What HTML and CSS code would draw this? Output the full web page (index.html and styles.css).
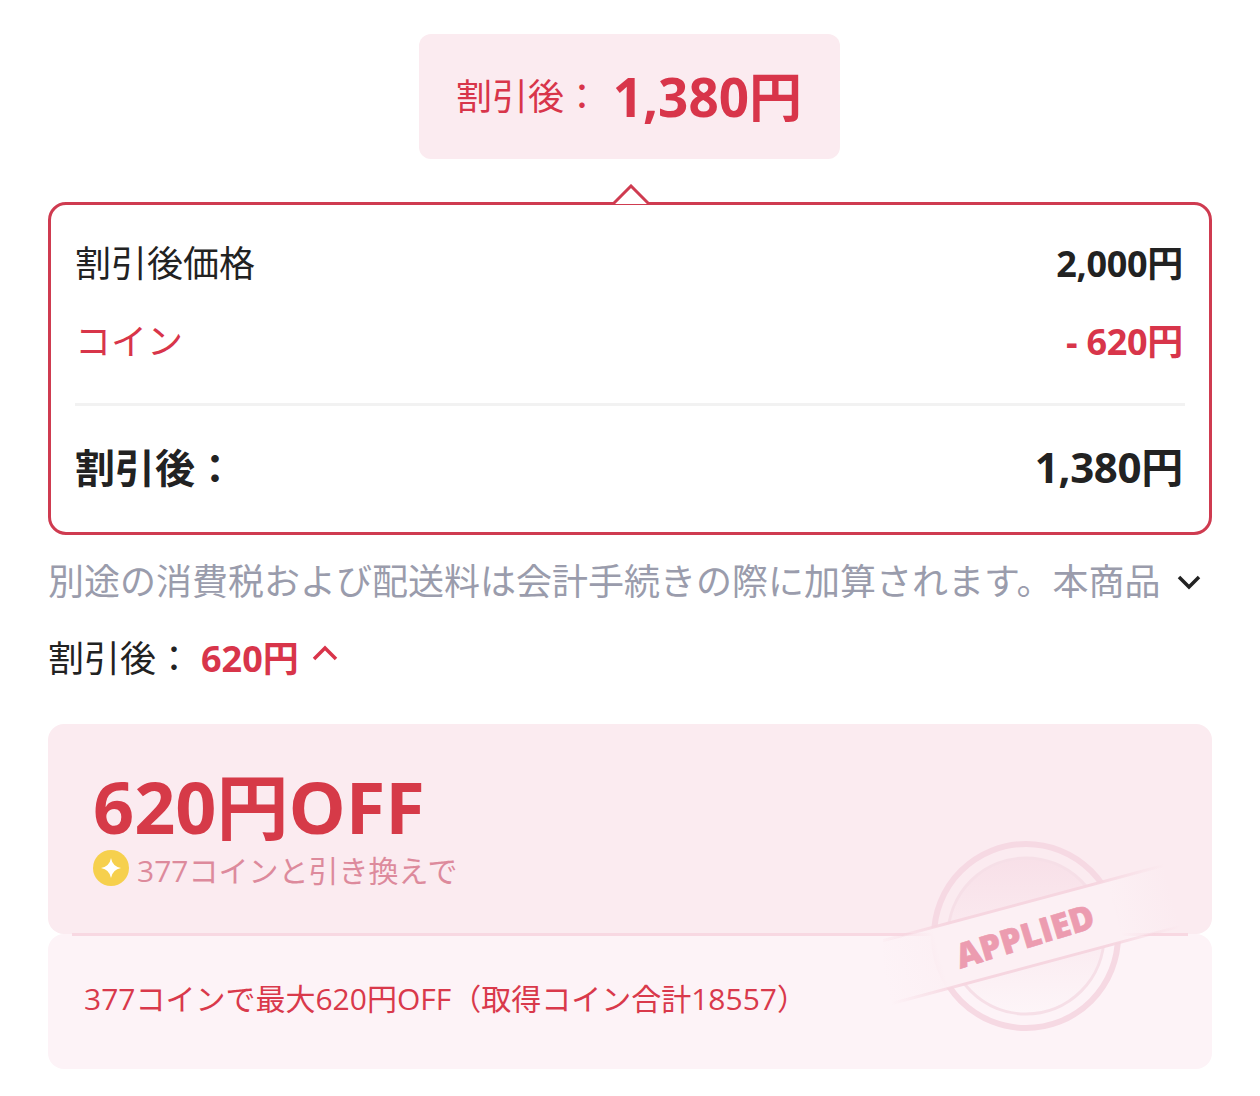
FILE: index.html
```html
<!DOCTYPE html>
<html lang="ja">
<head>
  <meta charset="UTF-8" />
  <title>割引後</title>
  <link rel="stylesheet" href="styles.css">
</head>
<body>
  <div class="badge-row">
    <div class="badge">
      <span class="badge-label">割引後：</span>
      <span class="badge-price">1,380円</span>
    </div>
  </div>

  <section class="detail">
    <svg class="detail-arrow" width="38" height="21" viewBox="0 0 38 21">
      <path d="M0 20 L1 20 L19 2 L37 20 L38 20" fill="#fff" stroke="#cf3b50" stroke-width="3" />
    </svg>
    <div class="detail-row">
      <span>割引後価格</span>
      <span class="amount">2,000円</span>
    </div>
    <div class="detail-row red">
      <span>コイン</span>
      <span class="amount">- 620円</span>
    </div>
    <div class="detail-row total">
      <span>割引後：</span>
      <span class="amount">1,380円</span>
    </div>
  </section>

  <div class="note-row">
    <p class="note">別途の消費税および配送料は会計手続きの際に加算されます。本商品</p>
    <svg class="chev" width="24" height="16" viewBox="0 0 24 16">
      <path d="M2 3 L12 13 L22 3" fill="none" stroke="#222" stroke-width="3.5" />
    </svg>
  </div>

  <div class="discount-row">
    <span>割引後：</span>
    <span class="discount-price">620円</span>
    <svg class="chev-up" width="26" height="16" viewBox="0 0 26 16">
      <path d="M2 14 L13 3 L24 14" fill="none" stroke="#d9344a" stroke-width="3.5" />
    </svg>
  </div>

  <section class="coupon">
    <div class="coupon-top">
      <div class="coupon-title">620円OFF</div>
      <div class="coupon-coin">
        <svg class="coin" width="36" height="36" viewBox="0 0 36 36">
          <circle cx="18" cy="18" r="18" fill="#f6d04d" />
          <path d="M18 8 Q19.5 16.5 28 18 Q19.5 19.5 18 28 Q16.5 19.5 8 18 Q16.5 16.5 18 8 Z" fill="#fff" />
        </svg>
        <span class="coin-text">377コインと引き換えで</span>
      </div>
    </div>
    <div class="coupon-line"></div>
    <div class="coupon-bottom">377コインで最大620円OFF（取得コイン合計18557）</div>

    <svg class="stamp" width="300" height="200" viewBox="0 0 300 200">
      <defs>
        <linearGradient id="band" x1="0" x2="1" y1="0" y2="0">
          <stop offset="0" stop-color="#fcf0f4" stop-opacity="0" />
          <stop offset="0.2" stop-color="#fcf0f4" />
          <stop offset="0.8" stop-color="#fcf0f4" />
          <stop offset="1" stop-color="#fcf0f4" stop-opacity="0" />
        </linearGradient>
        <linearGradient id="edge" x1="0" x2="1" y1="0" y2="0">
          <stop offset="0" stop-color="#f6d6e0" stop-opacity="0" />
          <stop offset="0.25" stop-color="#f6d6e0" />
          <stop offset="0.75" stop-color="#f6d6e0" />
          <stop offset="1" stop-color="#f6d6e0" stop-opacity="0" />
        </linearGradient>
        <linearGradient id="disc" x1="0" x2="0" y1="0" y2="1">
          <stop offset="0" stop-color="#f8e0e8" />
          <stop offset="1" stop-color="#fdf5f8" />
        </linearGradient>
      </defs>
      <circle cx="143" cy="100" r="92" fill="none" stroke="#f6d9e3" stroke-width="6" />
      <circle cx="143" cy="100" r="78" fill="url(#disc)" stroke="#f6dfe7" stroke-width="3" />
      <g transform="rotate(-15 143 100)">
        <rect x="-5" y="68" width="300" height="62" fill="url(#band)" />
        <rect x="-5" y="66" width="300" height="3" fill="url(#edge)" />
        <rect x="-5" y="129" width="300" height="3" fill="url(#edge)" />
      </g>
      <text class="stamp-text" x="142" y="112" text-anchor="middle" transform="rotate(-17 143 100)">APPLIED</text>
    </svg>
  </section>
</body>
</html>
```

FILE: styles.css
```css
body {
  margin: 0;
  padding: 34px 48px 0;
  font-family: "Open Sans", "Noto Sans CJK JP", sans-serif;
  background-color: #fff;
  color: #222;
  overflow: hidden;
}

.badge-row { display: flex; justify-content: center; }
.badge { width: 421px; height: 125px; margin-right: 1px; box-sizing: border-box; padding: 0 38px 5px 37px; background: #fbebf0; border-radius: 12px; display: flex; align-items: center; justify-content: space-between; color: #d8354a; }
.badge-label { font-size: 36px; white-space: nowrap; }
.badge-price { font-size: 53px; font-weight: 700; }

.detail { position: relative; margin-top: 43px; height: 333px; box-sizing: border-box; border: 3px solid #cf3b50; border-radius: 18px; padding: 17px 24px 0; }
.detail-arrow { position: absolute; left: 561px; top: -21px; }
.detail-row { display: flex; justify-content: space-between; align-items: center; height: 78px; font-size: 36px; }
.detail-row .amount { margin-right: 2px; font-weight: 700; letter-spacing: -0.3px; }
.detail-row.red { color: #d8354a; }
.detail-row.total { margin-top: 25px; padding-top: 26px; height: 68px; border-top: 3px solid #f2f2f2; font-size: 40px; font-weight: 700; }
.detail-row.total .amount { margin-top: -3px; font-size: 42px; }

.note-row { display: flex; align-items: center; height: 88px; gap: 17px; }
.note { flex: none; margin: 0; font-size: 36px; color: #9a9cac; white-space: nowrap; }
.chev { margin: 6px 7px 0 0; flex-shrink: 0; }

.discount-row { display: flex; align-items: center; height: 66px; font-size: 36px; }
.discount-price { margin-left: 9px; font-weight: 700; color: #d8354a; }
.chev-up { margin-left: 13px; margin-bottom: 6px; }

.coupon { position: relative; margin-top: 35px; }
.coupon-top { height: 210px; box-sizing: border-box; padding: 40px 45px 0; background: #fbebf0; border-radius: 16px; }
.coupon-title { font-size: 72px; font-weight: 700; line-height: 84px; color: #d63a48; }
.coupon-coin { display: flex; align-items: flex-start; gap: 8px; margin-top: 2px; font-size: 30px; line-height: 36px; color: #dd8a9c; }
.coin { flex-shrink: 0; }
.coin-text { margin-top: 3px; }
.coupon-line { position: absolute; left: 24px; right: 24px; top: 209px; height: 3px; background: #f8d8e2; }
.coupon-bottom { height: 135px; box-sizing: border-box; padding: 0 36px 10px; background: #fdf3f7; border-radius: 16px; font-size: 30px; color: #d9394b; display: flex; align-items: center; }

.stamp { position: absolute; left: 835px; top: 112px; }
.stamp-text { font-family: "Open Sans", sans-serif; font-size: 34px; font-weight: 800; fill: #ec9cb0; stroke: #ec9cb0; stroke-width: 0.6; }
```
